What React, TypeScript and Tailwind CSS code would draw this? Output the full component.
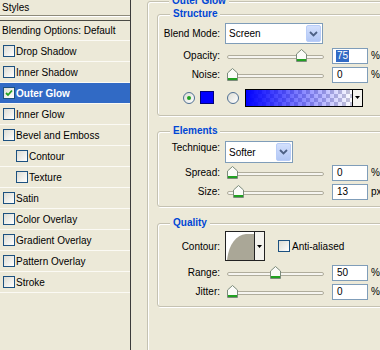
import type { ReactNode } from "react";

const styleItems = [
  { name: "Drop Shadow" },
  { name: "Inner Shadow" },
  { name: "Outer Glow", checked: true, active: true },
  { name: "Inner Glow" },
  { name: "Bevel and Emboss" },
  { name: "Contour", sub: true },
  { name: "Texture", sub: true },
  { name: "Satin" },
  { name: "Color Overlay" },
  { name: "Gradient Overlay" },
  { name: "Pattern Overlay" },
  { name: "Stroke" },
];

function Check({ checked = false }: { checked?: boolean }) {
  return (
    <span className="flex h-[12px] w-[12px] shrink-0 items-center justify-center border border-[#1c5180] bg-linear-to-br from-[#dcdcd4] to-white">
      {checked && (
        <svg width="8" height="8" viewBox="0 0 8 8">
          <path d="M1 4 L3 6 L7 1.5" stroke="#21a121" strokeWidth="1.8" fill="none" />
        </svg>
      )}
    </span>
  );
}

function Radio({ on = false }: { on?: boolean }) {
  return (
    <span className="flex h-[12px] w-[12px] shrink-0 items-center justify-center rounded-full border border-[#4f6f93] bg-linear-to-br from-[#dcdcd4] to-white">
      {on && <span className="h-[4px] w-[4px] rounded-full bg-[#21a121]" />}
    </span>
  );
}

function Chevron() {
  return (
    <svg width="9" height="6" viewBox="0 0 9 6">
      <path d="M1 1 L4.5 4.5 L8 1" stroke="#4d6185" strokeWidth="1.8" fill="none" />
    </svg>
  );
}

function Caret() {
  return (
    <svg width="5" height="3" viewBox="0 0 5 3">
      <path d="M0 0 H5 L2.5 3 Z" fill="#000" />
    </svg>
  );
}

function Select({ value, width }: { value: string; width: string }) {
  return (
    <div className={`flex items-stretch border border-[#7f9db9] bg-white ${width}`}>
      <span className="flex flex-1 items-center pl-[3px]">{value}</span>
      <span className="m-[1px] flex w-[15px] items-center justify-center rounded-[2px] border border-[#b9cdf8] bg-linear-to-b from-[#d3e0fd] to-[#b2c7f5]">
        <Chevron />
      </span>
    </div>
  );
}

function Slider({ pos }: { pos: number }) {
  const left = Math.round(pos * (97 - 11));
  return (
    <div className="relative ml-[7px] flex h-[13px] w-[97px] items-end pb-[3px]">
      <div className="h-[4px] w-full rounded-[2px] border border-[#b0ad9c] bg-[#f6f5f0]" />
      <svg width="11" height="13" viewBox="0 0 11 13" className="absolute top-0" style={{ left }}>
        <path d="M0.5 5 L5.5 0.5 L10.5 5 V12.5 H0.5 Z" fill="#fbfbf8" stroke="#7b8b7b" />
        <rect x="1" y="10" width="9" height="2" fill="#21a121" />
      </svg>
    </div>
  );
}

function SliderRow({
  label,
  pos,
  value,
  unit,
  selected = false,
}: {
  label: string;
  pos: number;
  value: string;
  unit: string;
  selected?: boolean;
}) {
  return (
    <div className="flex h-[19px] items-center">
      <span className="w-[62px] text-right">{label}</span>
      <Slider pos={pos} />
      <div className="ml-[8px] flex h-[16px] w-[36px] items-center border border-[#7f9db9] bg-white pl-[3px]">
        {selected ? <span className="bg-[#316ac5] px-[1px] leading-[12px] text-white">{value}</span> : <span className="pl-[1px]">{value}</span>}
      </div>
      <span className="ml-[3px]">{unit}</span>
    </div>
  );
}

function Group({ title, className = "", children }: { title: string; className?: string; children?: ReactNode }) {
  return (
    <fieldset className={`rounded-[3px] border border-[#c5c2b2] shadow-[inset_1px_1px_0_#ffffff,1px_1px_0_#ffffff] ${className}`}>
      <legend className="ml-[12px] bg-[#ece9d8] px-[3px] text-[10px] leading-[12px] font-bold text-[#0046d5]">{title}</legend>
      {children}
    </fieldset>
  );
}

export default function App() {
  return (
    <div className="flex h-[350px] w-[380px] overflow-hidden bg-[#ece9d8] font-['Liberation_Sans',Arial,sans-serif] text-[10px] text-black">
      {/* Styles list */}
      <div className="w-[131px] shrink-0 border-r border-[#3c3c3c]">
        <div className="flex h-[15px] items-center pl-[2px]">Styles</div>
        <div className="h-[6px] border-t border-b border-t-[#8d8a7a] border-b-[#4a4a44] shadow-[inset_0_1px_0_#ffffff]" />
        <div className="flex h-[20px] items-center border-b border-[#fbfaf4] pl-[2px]">Blending Options: Default</div>
        {styleItems.map((item) => (
          <div
            key={item.name}
            className={`flex h-[21px] items-center gap-[1px] border-b border-[#fbfaf4] ${item.sub ? "pl-[16px]" : "pl-[3px]"} ${
              item.active ? "bg-[#316ac5] font-bold text-white" : ""
            }`}
          >
            <Check checked={item.checked} />
            <span>{item.name}</span>
          </div>
        ))}
      </div>

      {/* Options */}
      <div className="shrink-0 pl-[16px]">
        <Group title="Outer Glow" className="mt-[-5px] h-[400px] w-[270px] pl-[9px]">
          <Group title="Structure" className="mt-[1px] w-[250px] pb-[8px]">
            <div className="flex h-[21px] items-center pt-0 mt-[3px]">
              <span className="w-[62px] text-right">Blend Mode:</span>
              <div className="ml-[5px] flex h-[21px]">
                <Select value="Screen" width="w-[98px]" />
              </div>
            </div>
            <div className="mt-[2px]">
              <SliderRow label="Opacity:" pos={0.8} value="75" unit="%" selected />
              <SliderRow label="Noise:" pos={0} value="0" unit="%" />
            </div>
            <div className="mt-[4px] flex h-[19px] items-center">
              <span className="ml-[25px]">
                <Radio on />
              </span>
              <span className="ml-[5px] h-[13px] w-[14px] border border-[#00007a] bg-[#0000ff]" />
              <span className="ml-[13px]">
                <Radio />
              </span>
              <div className="ml-[6px] flex h-[18px] w-[118px] border border-black">
                <div className="flex-1 bg-[repeating-conic-gradient(#c6c6d8_0_25%,#ffffff_0_50%)] bg-[length:8px_8px]">
                  <div className="h-full w-full bg-linear-to-r from-[#0000ff] to-[#0000ff00]" />
                </div>
                <div className="flex w-[10px] items-center justify-center border-l border-black bg-[#f4f3ee]">
                  <Caret />
                </div>
              </div>
            </div>
          </Group>

          <Group title="Elements" className="mt-[9px] w-[250px] pb-[5px]">
            <div className="mt-[4px] flex h-[22px] items-start">
              <span className="mt-[1px] w-[62px] text-right leading-[12px]">Technique:</span>
              <div className="ml-[5px] flex h-[22px]">
                <Select value="Softer" width="w-[68px]" />
              </div>
            </div>
            <SliderRow label="Spread:" pos={0} value="0" unit="%" />
            <SliderRow label="Size:" pos={0.07} value="13" unit="px" />
          </Group>

          <Group title="Quality" className="mt-[10px] w-[250px] pb-[5px]">
            <div className="mt-[2px] flex h-[30px] items-center">
              <span className="w-[62px] text-right">Contour:</span>
              <div className="ml-[5px] flex h-[30px] w-[40px] border border-[#222]">
                <svg width="28" height="28" viewBox="0 0 28 28" className="bg-white">
                  <path d="M1 28 C3 12 10 3 20 2 L28 2 L28 28 Z" fill="#aaa797" />
                </svg>
                <div className="flex flex-1 items-center justify-center border-l border-[#222] bg-[#f4f3ee]">
                  <Caret />
                </div>
              </div>
              <span className="ml-[13px]">
                <Check />
              </span>
              <span className="ml-[2px]">Anti-aliased</span>
            </div>
            <div className="mt-[2px]">
              <SliderRow label="Range:" pos={0.5} value="50" unit="%" />
              <SliderRow label="Jitter:" pos={0} value="0" unit="%" />
            </div>
          </Group>
        </Group>
      </div>
    </div>
  );
}
